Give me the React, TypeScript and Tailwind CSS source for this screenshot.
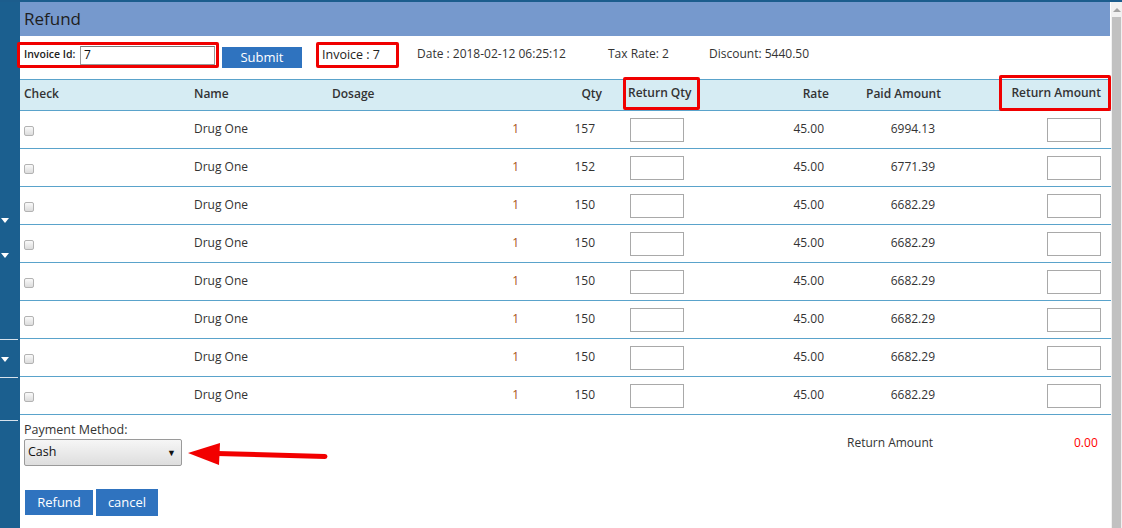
import React from "react";

const rows: [string, string][] = [
  ["157", "6994.13"],
  ["152", "6771.39"],
  ["150", "6682.29"],
  ["150", "6682.29"],
  ["150", "6682.29"],
  ["150", "6682.29"],
  ["150", "6682.29"],
  ["150", "6682.29"],
];

function Tri() {
  return (
    <div className="w-0 h-0 ml-[1px] border-l-[4px] border-r-[4px] border-t-[5px] border-l-transparent border-r-transparent border-t-white" />
  );
}

function CheckBox() {
  return (
    <div className="w-[10px] h-[10px] mt-[4px] rounded-[2px] border border-[#b3b3b3] bg-gradient-to-b from-[#fafafa] to-[#dcdcdc]" />
  );
}

function Box() {
  return <div className="w-[54px] h-[24px] border border-[#a9a9a9] bg-white" />;
}

export default function App() {
  return (
    <div
      className="w-[1122px] h-[528px] overflow-hidden flex flex-col bg-white text-[#333] text-[12px]"
      style={{ fontFamily: '"Open Sans", "Noto Sans", sans-serif' }}
    >
      <div className="h-[2px] bg-[#1c5d8d] shrink-0" />
      <div className="flex flex-1 min-h-0">
        {/* sidebar */}
        <div className="w-[20px] shrink-0 bg-[#1b5f8f] flex flex-col">
          <div className="h-[216px]" />
          <Tri />
          <div className="h-[30px]" />
          <Tri />
          <div className="h-[81px]" />
          <div className="h-[1px] w-[18px] bg-[#d7e2ec]" />
          <div className="h-[17px]" />
          <Tri />
          <div className="h-[15px]" />
          <div className="h-[1px] w-[18px] bg-[#d7e2ec]" />
          <div className="h-[42px]" />
          <div className="h-[1px] w-[18px] bg-[#d7e2ec]" />
        </div>

        {/* main */}
        <div className="w-[1091px] shrink-0 flex flex-col">
          <div className="h-[34px] bg-[#7699cd] flex items-center pl-[4px] w-[1090px]">
            <span className="text-[17px] text-[#1e1e1e]">Refund</span>
          </div>

          {/* invoice row */}
          <div className="mt-[6px] h-[26px] flex items-stretch">
            <div className="-ml-[3px] w-[202px] border-[3px] border-[#f00000] rounded-[2px] flex items-center pl-[4px] relative z-10">
              <span className="text-[10.5px] font-semibold text-[#222] whitespace-nowrap w-[56px] shrink-0">Invoice Id:</span>
              <div className="w-[135px] shrink-0 h-[19px] border border-[#999] border-t-[#777] flex items-center pl-[3px] text-[12px] text-[#111]">
                7
              </div>
            </div>
            <div className="ml-[3px] mt-[5px] w-[80px] h-[21px] bg-[#2f73bf] text-white text-[13px] flex items-center justify-center">
              Submit
            </div>
            <div className="ml-[14px] w-[83px] border-[3px] border-[#f00000] rounded-[2px] pl-[3px] pt-[1px] text-[12.5px] text-[#222]">
              Invoice : 7
            </div>
            <div className="ml-[18px] w-[191px] flex items-center pb-[2px]">Date : 2018-02-12 06:25:12</div>
            <div className="w-[101px] flex items-center pb-[2px]">Tax Rate: 2</div>
            <div className="flex items-center pb-[2px]">Discount: 5440.50</div>
          </div>

          {/* table header */}
          <div className="mt-[11px] h-[32px] flex items-center pb-[2px] bg-[#d6ecf3] border-y border-[#5aa3cb] text-[12px] font-semibold text-[#333]">
            <div className="w-[170px] pl-[4px]">Check</div>
            <div className="w-[138px] pl-[4px]">Name</div>
            <div className="w-[196px] pl-[4px]">Dosage</div>
            <div className="w-[80px] pr-[2px] text-right">Qty</div>
            <div className="w-[89px] h-full relative">
              <div className="absolute left-[19px] -top-[3px] w-[77px] h-[33px] border-[3px] border-[#f00000] rounded-[2px] flex items-center pl-[2px] pb-[1px]">
                Return Qty
              </div>
            </div>
            <div className="w-[140px] pr-[4px] text-right">Rate</div>
            <div className="w-[110px] pr-[2px] text-right">Paid Amount</div>
            <div className="w-[168px] h-full relative">
              <div className="absolute left-[56px] -top-[5px] w-[112px] h-[36px] border-[3px] border-[#f00000] rounded-[2px] flex items-center justify-end pr-[7px]">
                Return Amount
              </div>
            </div>
          </div>

          {/* rows */}
          {rows.map(([qty, paid], i) => (
            <div key={i} className="h-[38px] flex items-center pb-[2px] border-b border-[#5aa3cb]">
              <div className="w-[170px] pl-[4px]">
                <CheckBox />
              </div>
              <div className="w-[138px] pl-[4px]">Drug One</div>
              <div className="w-[196px] pr-[5px] text-right text-[#a8561a]">1</div>
              <div className="w-[80px] pr-[9px] text-right">{qty}</div>
              <div className="w-[89px] pl-[26px] pt-[2px] flex">
                <Box />
              </div>
              <div className="w-[140px] pr-[9px] text-right">45.00</div>
              <div className="w-[110px] pr-[8px] text-right">{paid}</div>
              <div className="w-[168px] pl-[104px] pt-[2px] flex">
                <Box />
              </div>
            </div>
          ))}

          {/* footer */}
          <div className="flex">
            <div className="w-[827px] pl-[4px] pt-[7px]">
              <div className="h-[16px] leading-[16px] text-[12.5px]">Payment Method:</div>
              <div className="mt-[1px] flex items-start">
                <div className="w-[158px] h-[27px] rounded-[2px] border border-[#9a9a9a] bg-gradient-to-b from-[#f6f6f6] to-[#dedede] flex items-center justify-between pl-[3px] pr-[5px] text-[12.5px] text-[#111]">
                  <span>Cash</span>
                  <span className="text-[9px] text-[#111]">▼</span>
                </div>
                <svg width="146" height="28" viewBox="0 0 146 28" className="ml-[4px] mt-[2px]">
                  <polygon points="2,12 34,2 33,24" fill="#f20000" />
                  <path d="M31 12.5 L139 15.5" stroke="#f20000" strokeWidth="5" strokeLinecap="round" />
                </svg>
              </div>
              <div className="mt-[20px] flex items-start">
                <div className="ml-[1px] mt-[1px] w-[68px] h-[25px] bg-[#2f73bf] text-white text-[13px] flex items-center justify-center">
                  Refund
                </div>
                <div className="ml-[3px] w-[62px] h-[27px] bg-[#2f73bf] text-white text-[13px] flex items-center justify-center">
                  cancel
                </div>
              </div>
            </div>
            <div className="mt-[19px] flex h-[17px] items-center">
              <div className="w-[227px]">Return Amount</div>
              <div className="text-[#ff0000]">0.00</div>
            </div>
          </div>
        </div>

        {/* scrollbar */}
        <div className="w-[11px] shrink-0 bg-[#f1f1f1] flex flex-col items-center">
          <div className="mt-[6px] w-0 h-0 border-l-[4px] border-r-[4px] border-b-[4px] border-l-transparent border-r-transparent border-b-[#a3a3a3]" />
          <div className="mt-[5px] w-[9px] flex-1 bg-[#c1c1c1]" />
        </div>
      </div>
    </div>
  );
}
